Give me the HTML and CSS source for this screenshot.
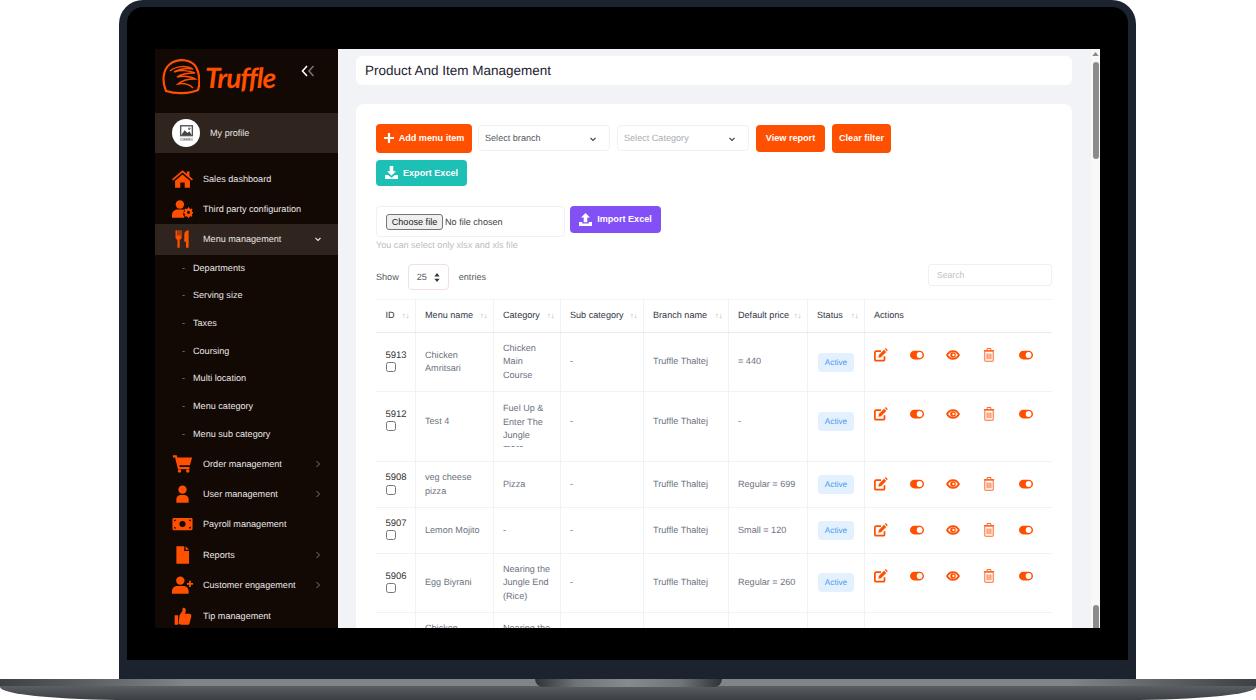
FILE: index.html
```html
<!DOCTYPE html>
<html lang="en">
<head>
    <meta charset="UTF-8">
    <title>Truffle - Product And Item Management</title>
    <link rel="stylesheet" href="styles.css">
</head>
<body>
    <svg class="sprite" xmlns="http://www.w3.org/2000/svg">
        <symbol id="i-edit" viewBox="0 0 16 16">
            <path d="M12 9.500V13a1.500 1.500 0 0 1-1.500 1.500h-8A1.500 1.500 0 0 1 1 13V5a1.500 1.500 0 0 1 1.500-1.500H8" fill="none" stroke="currentColor" stroke-width="2"/>
            <path d="M5.500 8l6-6 2.500 2.500-6 6-3 .6zM12.300 1.200l.5-.5a1 1 0 0 1 1.300 0l1.200 1.200a1 1 0 0 1 0 1.300l-.5.5z" fill="currentColor"/>
        </symbol>
        <symbol id="i-toggle" viewBox="0 0 16 10">
            <rect width="16" height="10" rx="5" fill="currentColor"/>
            <circle cx="11" cy="5" r="3.300" fill="#fff"/>
        </symbol>
        <symbol id="i-eye" viewBox="0 0 16 11">
            <path fill-rule="evenodd" d="M8 0c3.600 0 6.500 2.300 8 5.500C14.500 8.700 11.600 11 8 11S1.500 8.700 0 5.500C1.500 2.300 4.400 0 8 0zm0 2C5.900 2 3.900 3.300 2.500 5.500 3.900 7.700 5.900 9 8 9s4.100-1.300 5.500-3.500C12.100 3.300 10.100 2 8 2z" fill="currentColor"/>
            <path fill-rule="evenodd" d="M8 2.300a3.200 3.200 0 1 1 0 6.400 3.200 3.200 0 0 1 0-6.400zm.5 1.900a1.300 1.300 0 1 0 0 2.600 1.300 1.300 0 0 0 0-2.600z" fill="currentColor"/>
        </symbol>
        <symbol id="i-trash" viewBox="0 0 12 15">
            <path d="M1.500 3.500h9V13a1.300 1.300 0 0 1-1.300 1.300H2.800A1.300 1.300 0 0 1 1.500 13zM.5 2.800h11M4 2.500V1.200A.7.7 0 0 1 4.700.6h2.600a.7.7 0 0 1 .7.6v1.300M4 6v6M6 6v6M8 6v6" fill="none" stroke="currentColor" stroke-width="1.100" opacity=".85"/>
        </symbol>
        <symbol id="i-download" viewBox="0 0 16 16">
            <path d="M5.800 0h4.400v6.500h3.300L8 12 2.500 6.500h3.300zM0 11h3.800L8 14.500l4.200-3.500H16v5H0z" fill="currentColor"/>
        </symbol>
        <symbol id="i-upload" viewBox="0 0 16 16">
            <path d="M8 0l5.500 5.500h-3.300v6H5.800v-6H2.500zM0 11h4v1.800h8V11h4v5H0z" fill="currentColor"/>
        </symbol>
        <symbol id="i-chev-right" viewBox="0 0 8 8">
            <path d="M2.500 1l3 3-3 3" fill="none" stroke="currentColor" stroke-width="1"/>
        </symbol>
        <symbol id="i-chev-down" viewBox="0 0 8 8">
            <path d="M1.500 3l2.500 2.500L6.500 3" fill="none" stroke="currentColor" stroke-width="1.100"/>
        </symbol>
    </svg>

    <div class="laptop">
        <div class="bezel">
            <div class="screen">
                <aside class="sidebar">
                    <div class="brand">
                        <svg class="brand-mark" viewBox="0 0 38 36">
                            <path d="M4 32C0 23 .5 11 8 5c8-6 21-5 26 3 4 7 4 17 2 23-9 4-23 4-32 1z" fill="none" stroke="#ff4f00" stroke-width="2.200"/>
                            <path d="M8 12c6-5 17-6 23-2-6-1-14 0-19 3 6-2 15-2 21 1-6 0-14 1-18 4 5-1 13-1 18 2-5 0-13 1-17 5 5-1 12 0 15 4" fill="none" stroke="#ff4f00" stroke-width="1.500"/>
                        </svg>
                        <span class="brand-name">Truffle</span>
                        <svg class="collapse" viewBox="0 0 14 12">
                            <path d="M6 1L1.500 6 6 11" fill="none" stroke="#fff" stroke-width="1.600"/>
                            <path d="M12.500 1L8 6l4.500 5" fill="none" stroke="#77726e" stroke-width="1.600"/>
                        </svg>
                    </div>
                    <div class="profile">
                        <div class="avatar">
                            <svg viewBox="0 0 16 18" width="15" height="17">
                                <path d="M1 0h14v12H1z" fill="#555"/>
                                <path d="M2.500 1.500h11v9h-11z" fill="#fff"/>
                                <path d="M2.500 10.500l3.500-5 3 3 2-2 2.500 4z" fill="#444"/>
                                <circle cx="11" cy="4" r="1.300" fill="#777"/>
                                <path d="M1 13.500h14V17H1z" fill="#ccc"/>
                                <path d="M5 14.500h1.500v1.500H5zM7.500 14.500H9v1.500H7.500zM10 14.500h1.500v1.500H10z" fill="#777"/>
                            </svg>
                        </div>
                        <span>My profile</span>
                    </div>
                    <nav class="nav">
                        <a class="nav-item">
                            <svg class="nav-icon" viewBox="0 0 24 20"><path d="M12 0l5 4.200V1.500h3v5.300l4 3.400-1.300 1.500L12 2.600 1.300 11.700 0 10.200zM3.500 12L12 4.800l8.500 7.200v8h-6v-6h-5v6h-6z" fill="currentColor"/></svg>
                            <span>Sales dashboard</span>
                        </a>
                        <a class="nav-item">
                            <svg class="nav-icon" viewBox="0 0 24 20"><circle cx="9" cy="4.800" r="4.800" fill="currentColor"/><path d="M0 20v-3c0-4 3-6.500 6-6.500h6c1 0 2 .2 2.800.7A6 6 0 0 0 14 19v1z" fill="currentColor"/><path fill-rule="evenodd" d="M18.500 10.500l1 0 .4 1.500 1.300.6 1.400-.7.9 1-.8 1.300.4 1.300 1.500.5v1.300l-1.500.5-.4 1.300.8 1.300-.9 1-1.400-.7-1.300.6-.4 1.400h-1.300l-.4-1.400-1.300-.6-1.400.7-.9-1 .8-1.300-.4-1.300-1.500-.5v-1.300l1.500-.5.4-1.300-.8-1.300.9-1 1.400.7 1.300-.6zm.4 4.200a1.700 1.700 0 1 0 0 3.400 1.700 1.700 0 0 0 0-3.400z" transform="translate(0 -2.500)" fill="currentColor"/></svg>
                            <span>Third party configuration</span>
                        </a>
                        <a class="nav-item is-open">
                            <svg class="nav-icon" viewBox="0 0 24 20"><path d="M5 0h1.300v6h1V0h1.400v6h1V0H11v8c0 1.500-1 2.500-2.200 2.800V20H6.200v-9.200C5 10.500 4 9.500 4 8V0zM14 13V5c0-3 2-5 5-5v20h-3v-7z" fill="currentColor"/></svg>
                            <span>Menu management</span>
                            <svg class="nav-chev is-light"><use href="#i-chev-down"/></svg>
                        </a>
                        <div class="subnav">
                            <a>Departments</a>
                            <a>Serving size</a>
                            <a>Taxes</a>
                            <a>Coursing</a>
                            <a>Multi location</a>
                            <a>Menu category</a>
                            <a>Menu sub category</a>
                        </div>
                        <a class="nav-item">
                            <svg class="nav-icon" viewBox="0 0 24 20"><path d="M1 0h4.500l.6 2.500H23l-2.500 9H8.300l.5 2h11.200V16H6.800L3.500 2.500H1z" fill="currentColor"/><circle cx="8.500" cy="18" r="2" fill="currentColor"/><circle cx="18" cy="18" r="2" fill="currentColor"/></svg>
                            <span>Order management</span>
                            <svg class="nav-chev"><use href="#i-chev-right"/></svg>
                        </a>
                        <a class="nav-item">
                            <svg class="nav-icon" viewBox="0 0 24 20"><circle cx="12" cy="5" r="4.800" fill="currentColor"/><path d="M5 20v-4c0-3 2.200-5 5-5h4c2.800 0 5 2 5 5v4z" fill="currentColor"/></svg>
                            <span>User management</span>
                            <svg class="nav-chev"><use href="#i-chev-right"/></svg>
                        </a>
                        <a class="nav-item">
                            <svg class="nav-icon" viewBox="0 0 24 20"><path fill-rule="evenodd" d="M2 3h20a1.500 1.500 0 0 1 1.500 1.500v11A1.500 1.500 0 0 1 22 17H2a1.500 1.500 0 0 1-1.500-1.500v-11A1.500 1.500 0 0 1 2 3zm.5 2v2a2 2 0 0 0 2-2zm16.800 0a2.200 2.200 0 0 0 2.200 2V5zM2.500 13v2h2a2 2 0 0 0-2-2zm19 0a2.200 2.200 0 0 0-2.200 2h2.200zM12 6.500a3.500 3.500 0 1 0 0 7 3.500 3.500 0 0 0 0-7z" fill="currentColor"/></svg>
                            <span>Payroll management</span>
                        </a>
                        <a class="nav-item">
                            <svg class="nav-icon" viewBox="0 0 24 20"><path d="M5 0h9l0 5.500h5.500V20H5zM15.500 0l4 4h-4z" fill="currentColor"/></svg>
                            <span>Reports</span>
                            <svg class="nav-chev"><use href="#i-chev-right"/></svg>
                        </a>
                        <a class="nav-item">
                            <svg class="nav-icon" viewBox="0 0 24 20"><circle cx="9.500" cy="5" r="4.800" fill="currentColor"/><path d="M0 20v-3c0-3.500 2.500-6 6-6h7c3.500 0 6 2.500 6 6v3zM19.500 5h2v2.700H24v2h-2.500v2.600h-2V9.700H17v-2h2.500z" fill="currentColor"/></svg>
                            <span>Customer engagement</span>
                            <svg class="nav-chev"><use href="#i-chev-right"/></svg>
                        </a>
                        <a class="nav-item">
                            <svg class="nav-icon" viewBox="0 0 24 20"><path d="M3 9h4v11H3zM8.500 9.500L12 4V1c2-1 4 0 3.800 3L15 7.500h5c1.500 0 2.500 1.500 2 3l-2 8c-.3 1-1 1.500-2 1.500h-6c-2 0-3.500-.7-4.500-1.500z" fill="currentColor"/></svg>
                            <span>Tip management</span>
                        </a>
                    </nav>
                </aside>

                <main class="main">
                    <div class="content">
                        <div class="title-card"><h1>Product And Item Management</h1></div>
                        <section class="card">
                            <div class="toolbar">
                                <button class="btn btn-orange btn-add">
                                    <svg class="btn-icon icon-plus" viewBox="0 0 12 12"><path d="M4.700 0h2.600v4.700H12v2.600H7.300V12H4.700V7.300H0V4.700h4.700z" fill="currentColor"/></svg>
                                    Add menu item
                                </button>
                                <div class="select">Select branch<svg class="select-chev"><use href="#i-chev-down"/></svg></div>
                                <div class="select is-muted">Select Category<svg class="select-chev"><use href="#i-chev-down"/></svg></div>
                                <button class="btn btn-orange btn-report">View report</button>
                                <button class="btn btn-orange btn-clear">Clear filter</button>
                                <button class="btn btn-teal btn-export">
                                    <svg class="btn-icon"><use href="#i-download"/></svg>
                                    Export Excel
                                </button>
                            </div>

                            <div class="import-row">
                                <div class="file-box">
                                    <button class="file-btn">Choose file</button>
                                    <span>No file chosen</span>
                                </div>
                                <button class="btn btn-purple btn-import">
                                    <svg class="btn-icon"><use href="#i-upload"/></svg>
                                    Import Excel
                                </button>
                            </div>
                            <p class="hint">You can select only xlsx and xls file</p>

                            <div class="table-controls">
                                <div class="show">
                                    Show
                                    <div class="show-select">25
                                        <svg viewBox="0 0 8 12" width="6" height="9"><path d="M4 0l3.500 4.500h-7zM4 12L.5 7.500h7z" fill="#333"/></svg>
                                    </div>
                                    entries
                                </div>
                                <input class="search" type="text" placeholder="Search">
                            </div>

                            <table class="items">
                                <colgroup>
                                    <col class="c-id"><col class="c-name"><col class="c-cat"><col class="c-sub"><col class="c-branch"><col class="c-price"><col class="c-status"><col>
                                </colgroup>
                                <thead>
                                    <tr>
                                        <th><div class="th-in">ID<span class="sort">↑↓</span></div></th>
                                        <th><div class="th-in">Menu name<span class="sort">↑↓</span></div></th>
                                        <th><div class="th-in">Category<span class="sort">↑↓</span></div></th>
                                        <th><div class="th-in">Sub category<span class="sort">↑↓</span></div></th>
                                        <th><div class="th-in">Branch name<span class="sort">↑↓</span></div></th>
                                        <th><div class="th-in">Default price<span class="sort">↑↓</span></div></th>
                                        <th><div class="th-in">Status<span class="sort">↑↓</span></div></th>
                                        <th>Actions</th>
                                    </tr>
                                </thead>
                                <tbody>
                                    <tr>
                                        <td class="id">5913<input type="checkbox"></td>
                                        <td>Chicken Amritsari</td>
                                        <td>Chicken<br>Main<br>Course</td>
                                        <td>-</td>
                                        <td>Truffle Thaltej</td>
                                        <td>= 440</td>
                                        <td><span class="badge">Active</span></td>
                                        <td class="actions"><svg class="a-edit"><use href="#i-edit"/></svg><svg class="a-toggle"><use href="#i-toggle"/></svg><svg class="a-eye"><use href="#i-eye"/></svg><svg class="a-trash"><use href="#i-trash"/></svg><svg class="a-toggle"><use href="#i-toggle"/></svg></td>
                                    </tr>
                                    <tr class="row-tall">
                                        <td class="id">5912<input type="checkbox"></td>
                                        <td>Test 4</td>
                                        <td class="clip-cell"><div class="clip">Fuel Up &amp;<br>Enter The<br>Jungle<br>more</div></td>
                                        <td>-</td>
                                        <td>Truffle Thaltej</td>
                                        <td>-</td>
                                        <td><span class="badge">Active</span></td>
                                        <td class="actions"><svg class="a-edit"><use href="#i-edit"/></svg><svg class="a-toggle"><use href="#i-toggle"/></svg><svg class="a-eye"><use href="#i-eye"/></svg><svg class="a-trash"><use href="#i-trash"/></svg><svg class="a-toggle"><use href="#i-toggle"/></svg></td>
                                    </tr>
                                    <tr>
                                        <td class="id">5908<input type="checkbox"></td>
                                        <td>veg cheese pizza</td>
                                        <td>Pizza</td>
                                        <td>-</td>
                                        <td>Truffle Thaltej</td>
                                        <td>Regular = 699</td>
                                        <td><span class="badge">Active</span></td>
                                        <td class="actions"><svg class="a-edit"><use href="#i-edit"/></svg><svg class="a-toggle"><use href="#i-toggle"/></svg><svg class="a-eye"><use href="#i-eye"/></svg><svg class="a-trash"><use href="#i-trash"/></svg><svg class="a-toggle"><use href="#i-toggle"/></svg></td>
                                    </tr>
                                    <tr>
                                        <td class="id">5907<input type="checkbox"></td>
                                        <td>Lemon Mojito</td>
                                        <td>-</td>
                                        <td>-</td>
                                        <td>Truffle Thaltej</td>
                                        <td>Small = 120</td>
                                        <td><span class="badge">Active</span></td>
                                        <td class="actions"><svg class="a-edit"><use href="#i-edit"/></svg><svg class="a-toggle"><use href="#i-toggle"/></svg><svg class="a-eye"><use href="#i-eye"/></svg><svg class="a-trash"><use href="#i-trash"/></svg><svg class="a-toggle"><use href="#i-toggle"/></svg></td>
                                    </tr>
                                    <tr>
                                        <td class="id">5906<input type="checkbox"></td>
                                        <td>Egg Biyrani</td>
                                        <td>Nearing the<br>Jungle End<br>(Rice)</td>
                                        <td>-</td>
                                        <td>Truffle Thaltej</td>
                                        <td>Regular = 260</td>
                                        <td><span class="badge">Active</span></td>
                                        <td class="actions"><svg class="a-edit"><use href="#i-edit"/></svg><svg class="a-toggle"><use href="#i-toggle"/></svg><svg class="a-eye"><use href="#i-eye"/></svg><svg class="a-trash"><use href="#i-trash"/></svg><svg class="a-toggle"><use href="#i-toggle"/></svg></td>
                                    </tr>
                                    <tr>
                                        <td class="id"></td>
                                        <td class="cell-top">Chicken</td>
                                        <td class="cell-top">Nearing the</td>
                                        <td></td>
                                        <td></td>
                                        <td></td>
                                        <td></td>
                                        <td class="actions"></td>
                                    </tr>
                                </tbody>
                            </table>
                        </section>
                    </div>
                    <div class="scrollbar">
                        <svg class="scroll-up" viewBox="0 0 8 5" width="7" height="4"><path d="M4 0l4 5H0z" fill="#8a8a8a"/></svg>
                        <div class="thumb thumb-top"></div>
                        <div class="thumb thumb-bottom"></div>
                    </div>
                </main>
            </div>
        </div>
        <div class="chin"></div>
    </div>
    <div class="base">
        <div class="lip"><div class="notch"></div></div>
    </div>
</body>
</html>
```

FILE: styles.css
```css
html, body {
    margin: 0;
    padding: 0;
    height: 700px;
    overflow: hidden;
    background-color: #fff;
    font-family: "Liberation Sans", Arial, sans-serif;
    text-rendering: geometricPrecision;
}

.sprite {
    display: none;
}

/* laptop frame */
.laptop {
    width: 1017px;
    margin-left: 119px;
    background-color: #1c222e;
    border-radius: 24px 24px 0 0;
    padding: 7px 8px 0;
    box-sizing: border-box;
}

.bezel {
    background-color: #000;
    border-radius: 16px 16px 0 0;
    padding: 42px 28px 32px;
    height: 653px;
    box-sizing: border-box;
}

.screen {
    display: flex;
    height: 579px;
    overflow: hidden;
}

.chin {
    height: 19px;
}

.base {
    height: 21px;
    background: linear-gradient(#6d7276, #55595d 45%, #3b3e42);
    border-bottom-left-radius: 130px 13px;
    border-bottom-right-radius: 130px 13px;
    overflow: hidden;
}

.lip {
    height: 7px;
    display: flex;
    justify-content: center;
    background: linear-gradient(90deg, #3d4044, #7f8588 15%, #7f8588 85%, #3d4044);
}

.notch {
    width: 187px;
    height: 8px;
    border-radius: 0 0 8px 8px;
    background: linear-gradient(90deg, #303336, #6f7477 22%, #858b8e 50%, #6f7477 78%, #303336);
}

/* sidebar */
.sidebar {
    width: 183px;
    flex: none;
    background-color: #120804;
    color: #e8e6e4;
    font-size: 9.1px;
}

.brand {
    height: 64px;
    display: flex;
    align-items: center;
    padding: 0 0 8px 7px;
    box-sizing: border-box;
}

.brand-mark {
    width: 38px;
    height: 36px;
    flex: none;
}

.brand-name {
    width: 101px;
    padding-left: 5px;
    font-family: Lato, sans-serif;
    font-style: italic;
    font-weight: 700;
    font-size: 28px;
    letter-spacing: -1px;
    color: #ff4f00;
    box-sizing: border-box;
    white-space: nowrap;
}

.collapse {
    width: 14px;
    height: 12px;
    margin-top: -12px;
}

.profile {
    height: 40px;
    display: flex;
    align-items: center;
    gap: 10px;
    padding-left: 17px;
    background-color: #2f251e;
}

.avatar {
    width: 28px;
    height: 28px;
    border-radius: 50%;
    background-color: #fff;
    display: flex;
    align-items: center;
    justify-content: center;
}

.nav {
    padding-top: 10.5px;
}

.nav-item {
    height: 30.4px;
    display: flex;
    align-items: center;
    padding-left: 17px;
    padding-right: 16px;
}

.nav-item.is-open {
    background-color: #2f251e;
}

.nav-icon {
    width: 21px;
    height: 18px;
    color: #ff4f00;
    margin-right: 10px;
    flex: none;
}

.nav-chev {
    width: 8px;
    height: 8px;
    margin-left: auto;
    color: #7d7874;
}

.nav-chev.is-light {
    color: #e8e6e4;
}

.subnav a {
    display: block;
    height: 27.7px;
    line-height: 27.7px;
    padding-left: 38px;
    position: relative;
}

.subnav a::before {
    content: "-";
    position: absolute;
    left: 27px;
    color: #8a8480;
}

/* main area */
.main {
    flex: 1;
    display: flex;
    background-color: #f2f3f6;
    min-width: 0;
}

.content {
    flex: 1;
    min-width: 0;
    padding: 7px 19px 0 18px;
}

.title-card {
    height: 29px;
    background-color: #fff;
    border-radius: 6px;
    display: flex;
    align-items: center;
    padding: 0 0 1px 9px;
    box-sizing: border-box;
    margin-bottom: 19px;
}

h1 {
    margin: 0;
    font-size: 13.5px;
    font-weight: 400;
    color: #1d2130;
}

.card {
    background-color: #fff;
    border-radius: 8px;
    padding: 20px 20px 0;
}

.toolbar {
    display: flex;
    flex-wrap: wrap;
    align-items: flex-start;
    gap: 7px;
    max-width: 530px;
}

.btn {
    display: inline-flex;
    align-items: center;
    justify-content: center;
    border: none;
    border-radius: 4px;
    color: #fff;
    font-family: inherit;
    font-size: 9.1px;
    font-weight: 700;
    padding: 0 0 1px;
}

.btn-icon {
    width: 13px;
    height: 13px;
    margin-right: 5px;
}

.icon-plus {
    width: 10px;
    height: 10px;
}

.btn-orange {
    background-color: #ff4f00;
}

.btn-teal {
    background-color: #1cc0b4;
}

.btn-purple {
    background-color: #8350f5;
}

.btn-add {
    width: 96px;
    height: 29px;
    margin-right: -1px;
}

.btn-report {
    width: 69px;
    height: 27px;
    margin-top: 1px;
}

.btn-clear {
    width: 59px;
    height: 29px;
}

.btn-export {
    width: 91px;
    height: 26px;
}

.btn-import {
    width: 91px;
    height: 27px;
}

.select {
    width: 132px;
    height: 26px;
    margin-top: 1px;
    border: 1px solid #f1f1f4;
    border-radius: 4px;
    box-sizing: border-box;
    display: flex;
    align-items: center;
    justify-content: space-between;
    padding: 0 12px 1px 6px;
    font-size: 9.1px;
    color: #555a64;
}

.select.is-muted {
    color: #a9adb5;
}

.select-chev {
    width: 8px;
    height: 8px;
    margin-top: 3px;
    color: #444;
}

.import-row {
    display: flex;
    align-items: flex-start;
    gap: 5px;
    margin-top: 20px;
}

.file-box {
    width: 189px;
    height: 31px;
    border: 1px solid #f1f1f4;
    border-radius: 4px;
    box-sizing: border-box;
    display: flex;
    align-items: center;
    gap: 2px;
    padding-left: 9px;
    font-size: 9.1px;
    color: #444;
}

.file-btn {
    width: 57px;
    height: 16px;
    padding: 0;
    font-family: inherit;
    font-size: 9.1px;
    color: #222;
    background-color: #efefef;
    border: 1px solid #767676;
    border-radius: 3px;
}

.hint {
    margin: 2px 0 0;
    font-size: 9.1px;
    line-height: 13px;
    color: #bcbec4;
}

.table-controls {
    display: flex;
    justify-content: space-between;
    align-items: flex-start;
    margin-top: 12px;
    height: 35px;
}

.show {
    display: flex;
    align-items: center;
    height: 26px;
    font-size: 9.1px;
    color: #555a64;
}

.show-select {
    width: 41px;
    height: 26px;
    margin: 0 10px 0 9px;
    border: 1px solid #f2dfe4;
    border-radius: 4px;
    box-sizing: border-box;
    display: flex;
    align-items: center;
    justify-content: space-between;
    padding: 0 8px;
    color: #555a64;
}

.search {
    width: 124px;
    height: 22px;
    border: 1px solid #eff0f3;
    border-radius: 3px;
    box-sizing: border-box;
    padding: 0 8px;
    font-family: inherit;
    font-size: 8.6px;
    outline: none;
}

.search::placeholder {
    color: #c0c2c8;
}

/* table */
.items {
    width: 100%;
    table-layout: fixed;
    border-collapse: collapse;
    font-size: 9.1px;
    line-height: 13.4px;
}

.c-id { width: 39px; }
.c-name { width: 78px; }
.c-cat { width: 67px; }
.c-sub { width: 83px; }
.c-branch { width: 85px; }
.c-price { width: 79px; }
.c-status { width: 57px; }

.items th {
    height: 33px;
    padding: 0 5px 0 9.5px;
    text-align: left;
    font-weight: 400;
    color: #333845;
    border-top: 1px solid #f3f4f6;
    border-bottom: 1px solid #e9eaee;
    border-right: 1px solid #f1f2f5;
    box-sizing: border-box;
}

.th-in {
    display: flex;
    justify-content: space-between;
    align-items: center;
}

.sort {
    font-size: 7.5px;
    color: #a8acb4;
}

.items td {
    padding: 9px 4px 9px 9.5px;
    color: #6d7380;
    border-bottom: 1px solid #f1f2f5;
    border-right: 1px solid #f1f2f5;
    vertical-align: middle;
}

.items th:last-child,
.items td:last-child {
    border-right: none;
}

.items td.id {
    color: #333;
    font-size: 9.5px;
}

.id input {
    display: block;
    width: 10px;
    height: 10px;
    margin: 0 0 3.4px;
}

.items .row-tall td {
    padding-bottom: 19.5px;
}

.items .row-tall .clip-cell {
    padding-top: 10px;
    padding-bottom: 14.5px;
}

.clip {
    height: 44.5px;
    overflow: hidden;
}

.items td.cell-top {
    vertical-align: top;
    padding-top: 9px;
    padding-bottom: 40px;
}

.badge {
    display: inline-block;
    width: 36px;
    height: 19px;
    line-height: 19px;
    margin-left: 1px;
    text-align: center;
    background-color: #e3f0fd;
    border-radius: 4px;
    color: #4e9cf0;
    font-size: 8.2px;
}

.items td.actions {
    vertical-align: top;
    padding: 15px 0 0 9px;
    color: #ff4f00;
    white-space: nowrap;
    font-size: 0;
    line-height: 0;
}

.actions svg {
    display: inline-block;
    vertical-align: middle;
    height: 14px;
    width: 14px;
    margin-right: 22.3px;
}

/* fake scrollbar */
.scrollbar {
    width: 9px;
    flex: none;
    display: flex;
    flex-direction: column;
    align-items: center;
    background-color: #f8f8f9;
}

.scroll-up {
    margin-top: 3px;
}

.thumb {
    width: 6px;
    border-radius: 3px;
    background-color: #8b8b8b;
}

.thumb-top {
    height: 97px;
    margin-top: 6px;
}

.thumb-bottom {
    height: 30px;
    margin-top: auto;
    margin-bottom: -7px;
}
```
